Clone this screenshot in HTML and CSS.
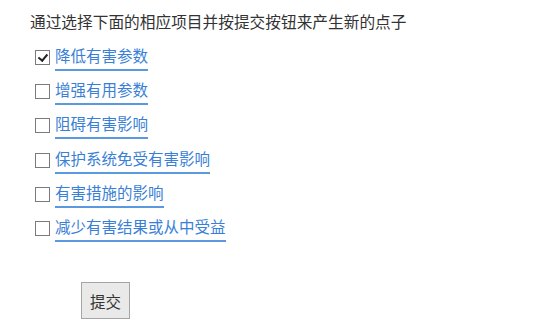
FILE: index.html
```html
<!DOCTYPE html>
<html lang="zh-CN">
<head>
    <meta charset="UTF-8">
    <meta name="viewport" content="width=device-width, initial-scale=1.0">
    <title>产生新的点子</title>
    <link rel="stylesheet" href="styles.css">
</head>
<body>
    <div class="idea-form">
        <p class="intro">通过选择下面的相应项目并按提交按钮来产生新的点子</p>

        <!-- 选项列表 -->
        <ul class="option-list">
            <li><label><input type="checkbox" checked><a href="#">降低有害参数</a></label></li>
            <li><label><input type="checkbox"><a href="#">增强有用参数</a></label></li>
            <li><label><input type="checkbox"><a href="#">阻碍有害影响</a></label></li>
            <li><label><input type="checkbox"><a href="#">保护系统免受有害影响</a></label></li>
            <li><label><input type="checkbox"><a href="#">有害措施的影响</a></label></li>
            <li><label><input type="checkbox"><a href="#">减少有害结果或从中受益</a></label></li>
        </ul>

        <div class="submit-row">
            <button type="button">提交</button>
        </div>
    </div>
</body>
</html>
```

FILE: styles.css
```css
body {
    font-family: "Noto Sans CJK SC", "Noto Sans", sans-serif;
    margin: 0;
    padding: 0;
    background-color: #ffffff;
    color: #333333;
}

.idea-form {
    padding: 11px 0 0 30px;
}

.intro {
    margin: 0;
    font-size: 15.7px;
    line-height: 22px;
}

.option-list {
    list-style: none;
    margin: 12px 0 0 0;
    padding: 0 0 0 5px;
}

.option-list li {
    height: 34.4px;
}

.option-list label {
    display: flex;
    align-items: center;
    height: 24px;
}

.option-list input {
    appearance: none;
    -webkit-appearance: none;
    width: 15px;
    height: 15px;
    margin: 0 5px 0 0;
    border: 1.5px solid #7a7a7a;
    background-color: #fff;
    position: relative;
    flex-shrink: 0;
}

.option-list input:checked::after {
    content: "";
    position: absolute;
    left: 4px;
    top: 1px;
    width: 3.5px;
    height: 7px;
    border-right: 2px solid #222;
    border-bottom: 2px solid #222;
    transform: rotate(40deg);
}

.option-list a {
    color: #3a7fd6;
    font-size: 15.5px;
    line-height: 22px;
    text-decoration: none;
    border-bottom: 2px solid #5a98e0;
    padding-bottom: 3px;
}

.submit-row {
    margin-top: 31px;
    padding-left: 51px;
}

.submit-row button {
    font-family: inherit;
    font-size: 15.5px;
    color: #333;
    width: 49px;
    height: 37px;
    padding: 0;
    border: 1px solid #a5a5a5;
    background-color: #e9e9e9;
    cursor: pointer;
}
```
